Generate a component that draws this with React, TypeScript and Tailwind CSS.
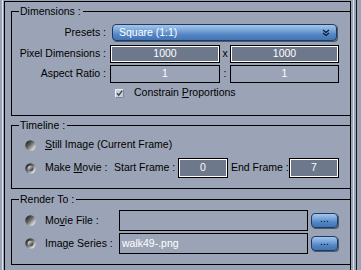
import { useId } from 'react';

const BLUE_BTN =
  'rounded-[4px] border border-[#1f3b63] bg-[linear-gradient(to_bottom,#a4c6ea_0%,#79a6da_35%,#5285c5_65%,#4274b4_100%)] shadow-[1px_1px_0_#4f5868]';

function Radio({ checked = false }: { checked?: boolean }) {
  const id = useId();
  return (
    <svg width="11" height="11" viewBox="0 0 11 11" className="shrink-0">
      <defs>
        <linearGradient id={`${id}o`} x1="0.1" y1="0.1" x2="0.9" y2="0.9">
          <stop offset="0" stopColor="#1c1c1c" />
          <stop offset="0.45" stopColor="#6a6a6a" />
          <stop offset="1" stopColor="#f4f4f4" />
        </linearGradient>
        <linearGradient id={`${id}i`} x1="0.1" y1="0.1" x2="0.9" y2="0.9">
          <stop offset="0" stopColor="#e8e8e8" />
          <stop offset="1" stopColor="#2a2a2a" />
        </linearGradient>
      </defs>
      <circle cx="5.5" cy="5.5" r="5.2" fill={`url(#${id}o)`} />
      {checked && <circle cx="5.5" cy="5.5" r="2.8" fill={`url(#${id}i)`} />}
    </svg>
  );
}

function Checkbox() {
  return (
    <svg width="9" height="9" viewBox="0 0 9 9" className="shrink-0">
      <rect x="0" y="0" width="9" height="9" fill="#c7ccd6" />
      <path d="M0.5 8.5V0.5H8.5" stroke="#eef0f4" fill="none" />
      <path d="M8.5 0.5V8.5H0.5" stroke="#7d8596" fill="none" />
      <path d="M2 4.2L3.8 6.2L7.2 1.6" stroke="#3b3f48" strokeWidth="1.3" fill="none" />
    </svg>
  );
}

function GroupBox({
  title,
  bodyHeight,
  className = '',
  children,
}: {
  title: string;
  bodyHeight: string;
  className?: string;
  children: React.ReactNode;
}) {
  return (
    <div className={className}>
      <div className="flex h-[13px] items-center">
        <span className="h-px w-[8px] bg-black" />
        <span className="pl-px pr-[2px] leading-[13px]">{title}</span>
        <span className="h-px flex-1 bg-black" />
      </div>
      <div className={`-mt-[6px] flex flex-col border-b border-l border-black ${bodyHeight}`}>
        {children}
      </div>
    </div>
  );
}

function Field({
  value = '',
  dark = false,
  className = '',
  align = 'center',
}: {
  value?: string;
  dark?: boolean;
  className?: string;
  align?: 'center' | 'left';
}) {
  return (
    <div
      className={`flex shrink-0 items-center border border-black text-white ${
        dark ? 'bg-[#6e788b] shadow-[inset_0_0_0_1px_#ffffff]' : ''
      } ${align === 'center' ? 'justify-center' : 'justify-start pl-[2px]'} ${className}`}
    >
      {value}
    </div>
  );
}

export default function App() {
  return (
    <div className="flex h-[270px] w-[361px] overflow-hidden bg-[#9ba4b6] font-['Liberation_Sans',Arial,sans-serif] text-[10.5px] text-black">
      <div className="ml-[2px] w-px shrink-0 bg-[#e2e5eb]" />
      <div className="ml-px mt-px flex w-[347px] shrink-0 flex-col border-l border-r border-t border-black pl-[6px]">
        {/* Dimensions */}
        <GroupBox title="Dimensions :" bodyHeight="h-[104px]" className="mt-[3px]">
          <div className="mt-[12px] flex h-[17px] items-center">
            <span className="w-[94px] text-right">Presets :</span>
            <button
              type="button"
              className={`ml-[6px] flex h-[17px] w-[225px] items-center justify-between pl-[6px] pr-[6px] text-white ${BLUE_BTN}`}
            >
              <span className="leading-none">Square (1:1)</span>
              <svg width="8" height="8" viewBox="0 0 8 8">
                <path d="M1 1L4 3.5L7 1M1 4L4 6.5L7 4" stroke="#0e1a2e" strokeWidth="1.2" fill="none" />
              </svg>
            </button>
          </div>
          <div className="mt-[4px] flex h-[18px] items-center">
            <span className="w-[94px] text-right">Pixel Dimensions :</span>
            <Field value="1000" dark className="ml-[4px] h-[18px] w-[110px]" />
            <span className="w-[10px] text-center">x</span>
            <Field value="1000" dark className="h-[18px] w-[109px]" />
          </div>
          <div className="mt-[2px] flex h-[18px] items-center">
            <span className="w-[94px] text-right">Aspect Ratio :</span>
            <Field value="1" className="ml-[4px] h-[18px] w-[110px]" />
            <span className="w-[10px] text-center">:</span>
            <Field value="1" className="h-[18px] w-[109px]" />
          </div>
          <div className="mt-[3px] flex h-[14px] items-center">
            <span className="ml-[103px]">
              <Checkbox />
            </span>
            <span className="ml-[10px]">
              Constrain <span className="underline">P</span>roportions
            </span>
          </div>
        </GroupBox>

        {/* Timeline */}
        <GroupBox title="Timeline :" bodyHeight="h-[63px]" className="mt-[3px]">
          <div className="mt-[12px] flex h-[14px] items-center">
            <span className="ml-[13px]">
              <Radio />
            </span>
            <span className="ml-[9px]">
              <span className="underline">S</span>till Image (Current Frame)
            </span>
          </div>
          <div className="mt-[6px] flex h-[20px] items-center">
            <span className="ml-[13px]">
              <Radio checked />
            </span>
            <span className="ml-[9px] w-[69px]">
              Make <span className="underline">M</span>ovie :
            </span>
            <span className="w-[64px]">Start Frame :</span>
            <Field value="0" dark className="h-[20px] w-[50px]" />
            <span className="ml-[3px] w-[58px]">End Frame :</span>
            <Field value="7" dark className="h-[20px] w-[50px]" />
          </div>
        </GroupBox>

        {/* Render To */}
        <GroupBox title="Render To :" bodyHeight="h-[65px]" className="mt-[4px]">
          <div className="mt-[10px] flex h-[21px] items-center">
            <span className="ml-[13px]">
              <Radio />
            </span>
            <span className="ml-[9px] w-[74px]">
              Mo<span className="underline">v</span>ie File :
            </span>
            <Field className="h-[21px] w-[189px]" />
            <button type="button" className={`ml-[3px] flex h-[15px] w-[27px] items-center justify-center pb-[3px] text-black ${BLUE_BTN}`}>
              ...
            </button>
          </div>
          <div className="mt-[2px] flex h-[21px] items-center">
            <span className="ml-[13px]">
              <Radio checked />
            </span>
            <span className="ml-[9px] w-[74px]">
              Ima<span className="underline">g</span>e Series :
            </span>
            <Field value="walk49-.png" align="left" className="h-[21px] w-[189px]" />
            <button type="button" className={`ml-[3px] flex h-[15px] w-[27px] items-center justify-center pb-[3px] text-black ${BLUE_BTN}`}>
              ...
            </button>
          </div>
        </GroupBox>
      </div>
      <div className="ml-[2px] w-px shrink-0 bg-[#e2e5eb]" />
      <div className="ml-[2px] w-px shrink-0 bg-[#1a1a1a]" />
    </div>
  );
}
